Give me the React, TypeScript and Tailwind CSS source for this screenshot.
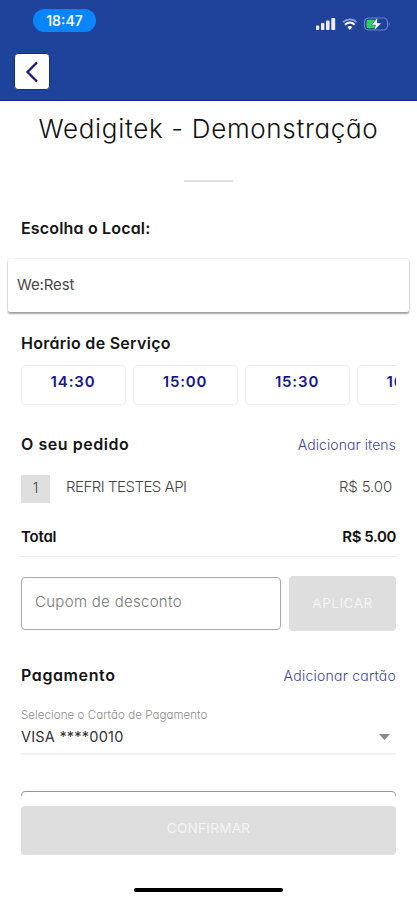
import type { ReactNode } from "react";

const times = ["14:30", "15:00", "15:30", "16:00"];

function StatusBar() {
  return (
    <div className="flex h-[53px] items-start justify-between pl-[33px] pr-[26px]">
      <div className="mt-[9px] flex h-[23px] w-[63px] items-center justify-center rounded-full bg-[#0a84ff] text-[14px] font-semibold text-[#eef4ff]">
        <span>18:47</span>
      </div>
      <svg className="mt-4" width="76" height="16" viewBox="0 0 76 16" fill="none">
        <g fill="#eceaf8">
          <rect x="1" y="9.5" width="3.2" height="4.5" rx="0.8" />
          <rect x="6" y="7" width="3.4" height="7" rx="0.8" />
          <rect x="11" y="4.6" width="3.6" height="9.4" rx="0.8" />
          <rect x="16.3" y="2" width="3.9" height="12" rx="0.8" />
        </g>
        <path d="M28 6.2C32 2.4 38 2.4 41.600 6.200" stroke="#8da0d2" strokeWidth="1.600" />
        <path d="M30 8.700C33 6 36.800 6 39.600 8.700" stroke="white" strokeWidth="2.200" />
        <path d="M32.300 11Q34.800 9.200 37.300 11L34.800 14Z" fill="white" />
        <rect x="49.500" y="2" width="23" height="12" rx="4" stroke="#6f83bd" strokeWidth="1.200" />
        <path d="M74 6v4q1.500-2 0-4Z" fill="#8394c9" />
        <rect x="51.500" y="3.700" width="9" height="8.600" rx="2" fill="#30d158" />
        <path d="M62.500 1.500L56.500 9h4l-1.300 5.500L66.500 7h-4.200Z" fill="white" stroke="#1f429b" strokeWidth="0.500" />
      </svg>
    </div>
  );
}

function SectionHeader({ title, action }: { title: ReactNode; action?: ReactNode }) {
  return (
    <div className="flex h-6 items-center justify-between whitespace-nowrap px-[21px] text-[16px] font-semibold text-[#151515]">
      {title}
      {action}
    </div>
  );
}

export default function App() {
  return (
    <div className="flex h-[900px] w-[417px] flex-col overflow-hidden bg-white font-['Inter','Liberation_Sans',sans-serif] [font-feature-settings:'cv11']">
      <header className="h-[101px] shrink-0 border-b border-[#10218a] bg-[#1f429b]">
        <StatusBar />
        <button className="ml-[14px] flex h-[37px] w-[36px] items-center justify-center rounded-[4px] border border-[#0c3090] bg-white">
          <svg width="14" height="22" viewBox="0 0 14 22" fill="none">
            <path d="M12 1.500L2.500 11L12 20.500" stroke="#15158a" strokeWidth="2.200" />
          </svg>
        </button>
      </header>

      <h1 className="mt-[9px] flex h-9 shrink-0 items-center justify-center whitespace-nowrap text-[26px] font-light tracking-[0.68px] text-[#111]">
        <span>Wedigitek - Demonstração</span>
      </h1>
      <div className="mx-auto mt-[34px] h-[2px] w-[49px] shrink-0 bg-[#e0e0e0]" />

      <div className="mt-[34px] shrink-0">
        <SectionHeader title={<span className="tracking-[0.17px]">Escolha o Local:</span>} />
      </div>
      <div className="mx-2 mt-[19px] flex h-[53px] shrink-0 items-center rounded-[2px] bg-white pl-[9px] text-[15px] tracking-[-0.1px] text-[#484848] shadow-[0_2px_2px_0px_rgba(0,0,0,0.35),0_0px_2px_0px_rgba(0,0,0,0.2)]">
        <span>We:Rest</span>
      </div>

      <div className="mt-[19px] shrink-0">
        <SectionHeader title={<span className="tracking-[0.28px]">Horário de Serviço</span>} />
      </div>
      <div className="mx-[21px] mt-[10px] flex h-10 shrink-0 gap-[7px] overflow-hidden">
        {times.map((time) => (
          <div
            key={time}
            className="flex w-[105px] shrink-0 items-center justify-center rounded-[4px] border border-[#ececec] pb-[5px] pr-[1px] text-[15px] font-semibold tracking-[0.85px] text-[#17178c]"
          >
            <span>{time}</span>
          </div>
        ))}
      </div>

      <div className="mt-[27px] shrink-0">
        <SectionHeader
          title={<span className="-mt-px tracking-[0.55px]">O seu pedido</span>}
          action={<span className="tracking-[0.08px] text-[14px] font-light text-[#3f4499]">Adicionar itens</span>}
        />
      </div>
      <div className="mx-[21px] mt-[19px] flex h-7 shrink-0 items-start text-[15px] font-light text-[#444]">
        <div className="flex h-7 w-[29px] items-center justify-center bg-[#dfdfe0] pb-1 text-[14px]">1</div>
        <div className="ml-[16px] flex h-6 flex-1 items-center tracking-[-0.5px]">
          <span>REFRI TESTES API</span>
        </div>
        <div className="mr-[4px] flex h-6 items-center tracking-[-0.15px]">
          <span>R$ 5.00</span>
        </div>
      </div>
      <div className="mx-[19px] mt-[22px] flex h-[32px] shrink-0 items-start justify-between border-b border-[#efefef] px-[2px] text-[15px] font-semibold leading-6 text-[#111]">
        <span className="tracking-[-0.2px]">Total</span>
        <span className="tracking-[-0.4px]">R$ 5.00</span>
      </div>

      <div className="mx-[21px] mt-[19px] flex h-[55px] shrink-0 gap-2">
        <div className="mt-[1px] flex h-[53px] w-[260px] items-center rounded-[4px] border border-[#a8a8a8] pb-[3px] pl-[13px] text-[15px] font-light tracking-[0.3px] text-[#777]">
          <span>Cupom de desconto</span>
        </div>
        <button className="flex flex-1 items-center justify-center rounded-[4px] bg-[#dedede] text-[13.5px] tracking-[0.5px] text-[#f4f4f4]">
          <span>APLICAR</span>
        </button>
      </div>

      <div className="mt-[32px] shrink-0">
        <SectionHeader
          title={<span className="tracking-[0.6px]">Pagamento</span>}
          action={<span className="mt-[1px] tracking-[0.25px] text-[14px] font-light text-[#3f4499]">Adicionar cartão</span>}
        />
      </div>
      <div className="mx-[21px] mt-[20px] h-[48px] shrink-0 border-b-2 border-[#f3f3f3] text-[#333]">
        <div className="flex h-4 items-center whitespace-nowrap pt-[2px] text-[11.5px] font-light tracking-[0.07px] text-[#8c8c8c]">
          <span>Selecione o Cartão de Pagamento</span>
        </div>
        <div className="flex h-[28px] items-center justify-between text-[14.5px] tracking-[0.22px]">
          <span>VISA ****0010</span>
          <svg className="mr-[6px]" width="11" height="6" viewBox="0 0 11 6">
            <path d="M0 0H11L5.500 6Z" fill="#888" />
          </svg>
        </div>
      </div>

      <div className="mx-[21px] mt-[36px] h-[5px] shrink-0 overflow-hidden">
        <div className="h-12 rounded-[4px] border border-[#999]" />
      </div>
      <button className="mx-[21px] mt-[10px] flex h-[49px] shrink-0 items-center justify-center rounded-[4px] bg-[#dedede] pb-[4px] text-[13.5px] tracking-[0.3px] text-[#f4f4f4]">
        <span>CONFIRMAR</span>
      </button>
      <div className="mx-auto mt-[33px] h-[4px] w-[149px] shrink-0 rounded-full bg-black" />
    </div>
  );
}
